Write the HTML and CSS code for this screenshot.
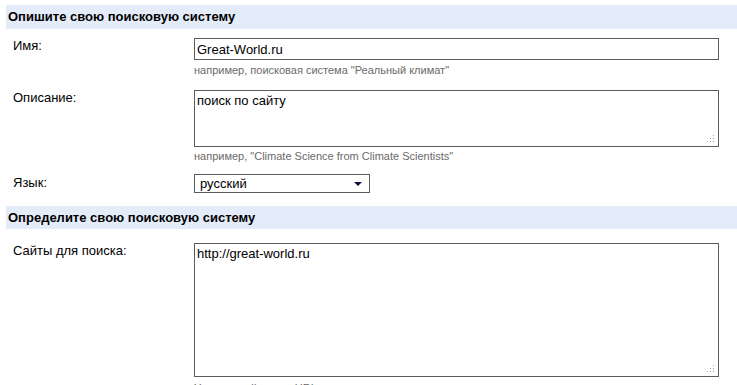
FILE: index.html
```html
<!DOCTYPE html>
<html lang="ru">
<head>
    <meta charset="UTF-8">
    <title>Опишите свою поисковую систему</title>
    <link rel="stylesheet" href="styles.css">
</head>
<body>
    <div class="page">
        <div class="section-title">Опишите свою поисковую систему</div>

        <div class="row row-name">
            <label for="name">Имя:</label>
            <div class="field">
                <input type="text" id="name" value="Great-World.ru">
                <div class="hint">например, поисковая система "Реальный климат"</div>
            </div>
        </div>

        <div class="row row-desc">
            <label for="desc">Описание:</label>
            <div class="field">
                <div class="area-wrap">
                    <textarea id="desc" class="area-small">поиск по сайту</textarea>
                    <svg class="grip" width="8" height="8" viewBox="0 0 8 8">
                        <rect x="6" y="0" width="1" height="1"/>
                        <rect x="3" y="3" width="1" height="1"/><rect x="6" y="3" width="1" height="1"/>
                        <rect x="0" y="6" width="1" height="1"/><rect x="3" y="6" width="1" height="1"/><rect x="6" y="6" width="1" height="1"/>
                    </svg>
                </div>
                <div class="hint">например, "Climate Science from Climate Scientists"</div>
            </div>
        </div>

        <div class="row row-lang">
            <label for="lang">Язык:</label>
            <div class="field">
                <div class="select-wrap">
                    <select id="lang">
                        <option>русский</option>
                    </select>
                    <span class="arrow"></span>
                </div>
            </div>
        </div>

        <div class="section-title second">Определите свою поисковую систему</div>

        <div class="row row-sites">
            <label for="sites">Сайты для поиска:</label>
            <div class="field">
                <div class="area-wrap">
                    <textarea id="sites" class="area-big">http://great-world.ru</textarea>
                    <svg class="grip" width="8" height="8" viewBox="0 0 8 8">
                        <rect x="6" y="0" width="1" height="1"/>
                        <rect x="3" y="3" width="1" height="1"/><rect x="6" y="3" width="1" height="1"/>
                        <rect x="0" y="6" width="1" height="1"/><rect x="3" y="6" width="1" height="1"/><rect x="6" y="6" width="1" height="1"/>
                    </svg>
                </div>
                <div class="hint">Укажите сайты или URL-адреса</div>
            </div>
        </div>
    </div>
</body>
</html>
```

FILE: styles.css
```css
* {
    margin: 0;
    padding: 0;
    box-sizing: border-box;
}

body {
    font-family: 'Liberation Sans', Arial, sans-serif;
    font-size: 13px;
    color: #000;
    background: #fff;
    overflow: hidden;
}

.page {
    padding: 5px 0 0 6px;
}

.section-title {
    background: #e5ecf9;
    font-weight: bold;
    height: 24px;
    line-height: 24px;
    padding-left: 2px;
}

.section-title.second {
    margin-top: 13px;
    height: 23px;
    line-height: 23px;
}

.row {
    display: grid;
    grid-template-columns: 181px 525px;
    padding-left: 7px;
}

.row label {
    line-height: 16px;
}

.row-name {
    margin-top: 9px;
}

.row-desc {
    margin-top: 13px;
}

.row-lang {
    margin-top: 11px;
}

.row-lang label {
    padding-top: 1px;
}

.row-sites {
    margin-top: 14px;
}

input[type="text"], textarea, select {
    font-family: 'Liberation Sans', Arial, sans-serif;
    font-size: 13px;
    color: #000;
    border: 1px solid #5b5b5b;
    background: #fff;
    outline: none;
}

input[type="text"] {
    width: 100%;
    height: 22px;
    padding: 0 2px;
}

.area-wrap {
    position: relative;
}

textarea {
    display: block;
    width: 100%;
    resize: none;
    padding: 2px 2px;
    line-height: 16px;
}

.area-small {
    height: 57px;
}

.area-big {
    height: 134px;
}

.grip {
    position: absolute;
    right: 4px;
    bottom: 4px;
    fill: #a0a0a0;
}

.hint {
    font-size: 11px;
    line-height: 14px;
    color: #6a6a6a;
    margin-top: 3px;
}

.row-desc .hint {
    margin-top: 2px;
}

.row-sites .hint {
    margin-top: 4px;
}

.select-wrap {
    position: relative;
    width: 176px;
}

select {
    -webkit-appearance: none;
    appearance: none;
    width: 176px;
    height: 19px;
    padding: 0 5px;
    border-radius: 0;
}

.arrow {
    position: absolute;
    right: 8px;
    top: 8px;
    width: 0;
    height: 0;
    border-left: 4px solid transparent;
    border-right: 4px solid transparent;
    border-top: 4px solid #101040;
    pointer-events: none;
}
```
